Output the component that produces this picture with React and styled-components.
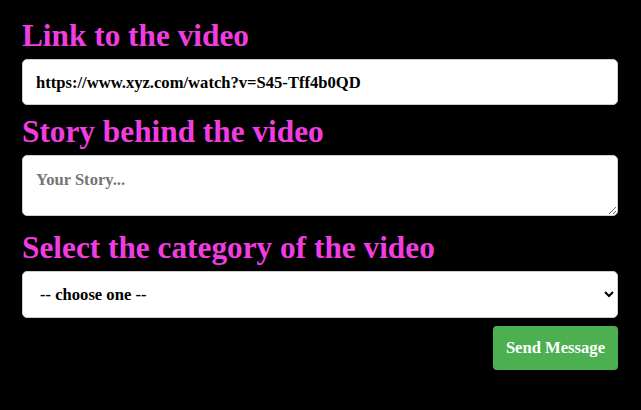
import React from 'react';
import styled, { createGlobalStyle } from 'styled-components';

const GlobalStyle = createGlobalStyle`
    html, body {
        margin: 0;
        background: #000;
        font-family: "Liberation Serif", "Times New Roman", serif;
    }
`;

const App = () => {
    return (
        <>
            <GlobalStyle />
            <Form onSubmit={(e) => e.preventDefault()}>
                <Label htmlFor="link">Link to the video</Label>
                <Input id="link" type="text" defaultValue="https://www.xyz.com/watch?v=S45-Tff4b0QD" />
                <Label htmlFor="story">Story behind the video</Label>
                <TextArea id="story" placeholder="Your Story..." />
                <Label htmlFor="category">Select the category of the video</Label>
                <Select id="category" defaultValue="">
                    <option value="">-- choose one --</option>
                    <option value="music">Music</option>
                    <option value="comedy">Comedy</option>
                    <option value="education">Education</option>
                </Select>
                <Actions>
                    <Button type="submit">Send Message</Button>
                </Actions>
            </Form>
        </>
    );
};

const accent = "#f03de0";
const serif = `"Liberation Serif", "Times New Roman", serif`;

const Form = styled.form`
    display: flex;
    flex-direction: column;
    padding: 17px 23px 0 22px;
`;

const Label = styled.label`
    color: ${accent};
    font-size: 31.3px;
    font-weight: bold;
    line-height: 34px;
    padding-top: 2px;
    margin-bottom: 6px;
`;

const field = `
    box-sizing: border-box;
    width: 100%;
    border: 1px solid #ccc;
    border-radius: 5px;
    background: #fff;
    font-family: ${serif};
    font-size: 16.6px;
    font-weight: bold;
    color: #000;
    padding: 12px 13px;
    margin: 0 0 8px;
`;

const Input = styled.input`
    ${field}
    height: 46px;
    padding-top: 13px;
    padding-bottom: 11px;
`;

const TextArea = styled.textarea`
    ${field}
    height: 61px;
    padding-top: 14px;
    margin-bottom: 13px;
    resize: vertical;
    &::placeholder {
        color: #757575;
    }
`;

const Select = styled.select`
    ${field}
    height: 47px;
    padding: 12px 14px 12px 13px;
`;

const Actions = styled.div`
    display: flex;
    justify-content: flex-end;
`;

const Button = styled.button`
    background: #4caf50;
    color: #fff;
    border: none;
    border-radius: 4px;
    padding: 0 13px;
    height: 44px;
    font-family: ${serif};
    font-size: 16.6px;
    font-weight: bold;
    cursor: pointer;
`;

export default App;
